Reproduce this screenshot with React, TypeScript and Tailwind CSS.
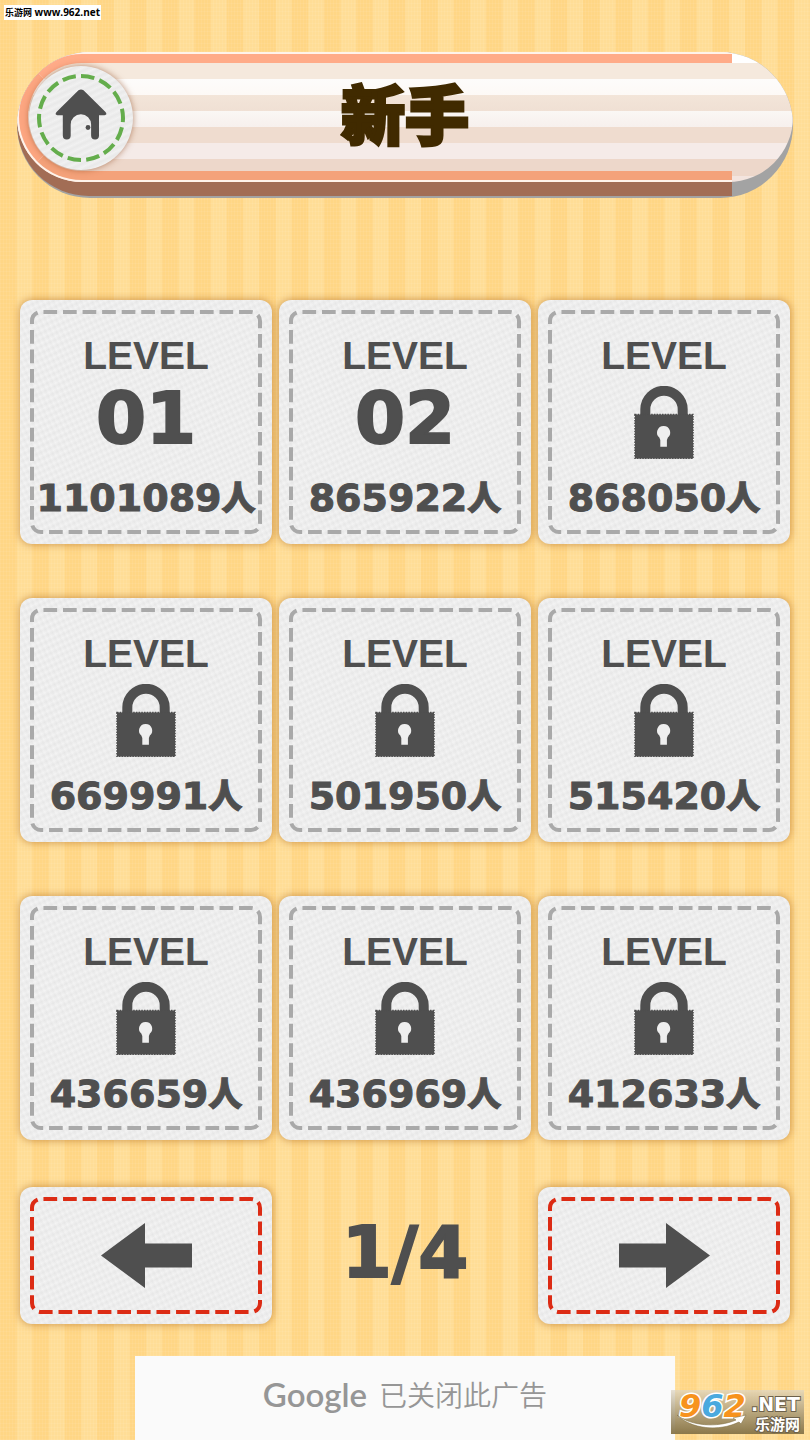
import { clsx } from "clsx";

const levels = [
  { no: "01", players: 1101089, locked: false },
  { no: "02", players: 865922, locked: false },
  { no: "03", players: 868050, locked: true },
  { no: "04", players: 669991, locked: true },
  { no: "05", players: 501950, locked: true },
  { no: "06", players: 515420, locked: true },
  { no: "07", players: 436659, locked: true },
  { no: "08", players: 436969, locked: true },
  { no: "09", players: 412633, locked: true },
];

// Embossed paper shared by the level cards and pager buttons
const paper =
  "relative rounded-xl bg-[#ededed] bg-[repeating-linear-gradient(155deg,rgba(255,255,255,0.25)_0px,rgba(214,214,214,0.15)_3px,rgba(255,255,255,0.2)_6px),repeating-linear-gradient(65deg,rgba(255,255,255,0.2)_0px,rgba(210,210,210,0.15)_3px,rgba(255,255,255,0.2)_5px)] shadow-[0_0_8px_rgba(165,95,20,0.6)]";

const stackCell = "col-start-1 row-start-1";

function Stitching({ className, dashes }: { className: string; dashes: number }) {
  return (
    <svg className="absolute inset-0 h-full w-full" aria-hidden="true">
      <rect
        x="12"
        y="12"
        rx="9"
        pathLength={dashes * 4}
        strokeDasharray="2.8 1.2"
        strokeDashoffset="-0.5"
        strokeWidth="4"
        fill="none"
        className={clsx("h-[calc(100%-24px)] w-[calc(100%-24px)]", className)}
      />
    </svg>
  );
}

function LockIcon() {
  return (
    <svg width="60" height="73" viewBox="0 0 60 73" role="img" aria-label="LOCK">
      <path d="M11.3 30V23.5a18.7 18.7 0 0 1 37.4 0V30" fill="none" stroke="#4f4f4f" strokeWidth="10" />
      <rect x="1" y="28.5" width="58" height="44" fill="#4f4f4f" />
      <rect x="1" y="28.5" width="58" height="44" fill="none" stroke="#4f4f4f" strokeWidth="1.6" strokeDasharray="1.5 1.2" />
      <path d="M29.7 40a6.6 6.6 0 0 1 4.2 11.6l-1 2.4v6.800h-6.600V54l-1-2.400A6.600 6.600 0 0 1 29.700 40Z" fill="#efefef" />
    </svg>
  );
}

function ArrowIcon({ flip = false }: { flip?: boolean }) {
  return (
    <svg width="91" height="65" viewBox="0 0 91 65" aria-hidden="true">
      <path
        d={flip ? "M91 32.5 47 0v20.5H0v24h47V65Z" : "M0 32.5 44 0v20.5h47v24H44V65Z"}
        fill="#4f4f4f"
      />
    </svg>
  );
}

function HomeButton() {
  return (
    <button
      type="button"
      aria-label="Home"
      className="h-26 w-26 rounded-full bg-[#ececec] bg-[repeating-linear-gradient(155deg,rgba(255,255,255,0.3)_0px,rgba(214,214,214,0.15)_3px,rgba(255,255,255,0.2)_6px)] shadow-[0_0_6px_rgba(140,70,30,0.6)]"
    >
      <svg width="104" height="104" viewBox="0 0 104 104" aria-hidden="true">
        <circle
          cx="52"
          cy="52"
          r="42"
          fill="none"
          stroke="#64ad4c"
          strokeWidth="4"
          pathLength="140"
          strokeDasharray="7.2 2.8"
          transform="rotate(-90 52 52)"
        />
        <path
          d="M49.5 24.3q2.500-1.800 5 0L76.500 46q2.200 2.800-1 3.200H70V69.500a3.900 3.900 0 0 1-7.900 0V58.500a10.200 10.200 0 0 0-20.400 0V69.500a3.900 3.900 0 0 1-7.900 0V49.200H28.500q-3.200-.4-1-3.200Z"
          fill="#4f4f4f"
        />
        <circle cx="59" cy="61.500" r="2.400" fill="#4f4f4f" />
      </svg>
    </button>
  );
}

function TitleBar() {
  return (
    <header className="mx-[17px] grid overflow-hidden rounded-[73px] bg-[#a3a3a3]">
      {/* Base edge of the plank */}
      <div className={clsx(stackCell, "mr-[61px] mb-[2px] rounded-l-[72px] bg-[#a26d55]")} />
      {/* Striped face */}
      <div
        className={clsx(
          stackCell,
          "mb-4 h-[130px] rounded-full bg-[linear-gradient(#ffffff_0px_11px,#f5e9dd_11px_27px,#fdfcfb_27px,#fdf9f6_43px,#f3e5d9_43px,#f0e0d4_59px,#faf7f4_59px,#f7f0ed_75px,#efdccf_75px_91px,#f5ebe8_91px_107px,#edd7ca_107px_124px,#f3e4de_124px)]",
        )}
      />
      <div
        className={clsx(
          stackCell,
          "mr-[61px] mb-4 rounded-l-[65px] border-y-2 border-l-2 border-[#fff3ea]",
        )}
      >
        <div className="h-full rounded-l-[63px] border-y-9 border-l-9 border-t-[#ffab88] border-b-[#f4a27a] border-l-[#fca681]" />
      </div>
      <div className={clsx(stackCell, "mb-4 ml-3 flex items-center pt-[2px]")}>
        <HomeButton />
      </div>
      <h1
        className={clsx(
          stackCell,
          "mb-4 self-center justify-self-center pb-3 font-['Noto_Sans_CJK_SC',sans-serif] text-[64px] leading-[64px] font-black text-[#402a00] [-webkit-text-stroke:3px_#402a00]",
        )}
      >
        新手
      </h1>
    </header>
  );
}

function LevelCard({ no, players, locked }: (typeof levels)[number]) {
  return (
    <button
      type="button"
      disabled={locked}
      className={clsx(paper, "flex flex-col items-center pt-9 pb-[26px] text-[#4f4f4f]")}
    >
      <Stitching className="stroke-[#a9a9a9]" dashes={45} />
      <span className="font-['Liberation_Sans',sans-serif] text-[39px] leading-10 font-bold">LEVEL</span>
      <span
        className={clsx(
          "flex h-[88px] items-center font-['DejaVu_Sans',sans-serif] text-[72px] leading-[72px] font-bold [-webkit-text-stroke:2px_#4f4f4f]",
          locked ? "pt-1" : "pb-1",
        )}
      >
        {locked ? <LockIcon /> : no}
      </span>
      <span className="mt-[14px] flex items-center font-['DejaVu_Sans',sans-serif] text-[38px] leading-10 font-bold whitespace-nowrap [-webkit-text-stroke:1px_#4f4f4f]">
        {players}
        <span className="-mt-1 font-['Noto_Sans_CJK_JP',sans-serif] text-[34px] font-black">人</span>
      </span>
    </button>
  );
}

function Pager() {
  return (
    <nav className="mt-[47px] grid grid-cols-3 items-center gap-x-[7px] px-5">
      <button type="button" aria-label="Previous" className={clsx(paper, "flex justify-center py-9")}>
        <Stitching className="stroke-[#dc2b14]" dashes={34} />
        <ArrowIcon />
      </button>
      <span className="pb-2 text-center font-['DejaVu_Sans',sans-serif] text-[72px] leading-[72px] font-bold text-[#4f4f4f] [-webkit-text-stroke:2px_#4f4f4f]">
        1/4
      </span>
      <button type="button" aria-label="Next" className={clsx(paper, "flex justify-center py-9")}>
        <Stitching className="stroke-[#dc2b14]" dashes={34} />
        <ArrowIcon flip />
      </button>
    </nav>
  );
}

function SiteLogo() {
  return (
    <div className="absolute right-[6px] bottom-[6px] flex h-11 w-[133px] justify-between bg-linear-to-b from-[#ded6c4]/70 to-[#857347]/95 pr-1 pl-2">
      <div className="font-['DejaVu_Sans',sans-serif] text-[32px] leading-8 font-bold text-[#f7931e] italic [-webkit-text-stroke:3px_#fff] [paint-order:stroke_fill]">
        9<span className="text-[#4aa9de]">6</span>2
      </div>
      <svg className="absolute bottom-1 left-1 h-4 w-[72px]" viewBox="0 0 72 16" aria-hidden="true">
        <path
          d="M2 1C16 12 42 14 61 6l-3-2 13-3-5 9-2-2C44 18 16 15 2 1Z"
          fill="#fff"
          stroke="#857347"
          strokeWidth=".6"
        />
      </svg>
      <div className="flex flex-col items-end text-white [-webkit-text-stroke:2px_#6d614b] [paint-order:stroke_fill]">
        <span className="pt-1 font-['DejaVu_Sans',sans-serif] text-[19px] leading-5 font-bold">.NET</span>
        <span className="font-['Noto_Sans_CJK_SC',sans-serif] text-[15px] leading-5 font-bold">乐游网</span>
      </div>
    </div>
  );
}

export default function App() {
  return (
    <div className="relative flex min-h-screen flex-col bg-[#ffda88] bg-[repeating-linear-gradient(0deg,rgba(255,255,255,0.06)_0px_1px,transparent_1px_4px),repeating-linear-gradient(90deg,rgba(255,255,255,0.06)_0px_1px,transparent_1px_3px),linear-gradient(90deg,#ffd685_50%,#ffdd96_50%)] bg-[length:auto,auto,4%_100%] pt-13">
      <div className="absolute top-[5px] left-1 bg-white px-px font-['Open_Sans','Noto_Sans_CJK_SC',sans-serif] text-[10px] leading-[14px] font-bold whitespace-nowrap text-black">
        <span className="text-[9px]">乐游网</span> www.962.net
      </div>

      <TitleBar />

      <main className="mt-[102px] grid grid-cols-3 gap-x-[7px] gap-y-[54px] px-5">
        {levels.map((level) => (
          <LevelCard key={level.no} {...level} />
        ))}
      </main>

      <Pager />

      <footer className="mt-8 flex w-2/3 grow items-center justify-center gap-3 self-center bg-[#fafafa] pt-4 pb-6 leading-10 text-[#969696]">
        <span className="font-['Lato',sans-serif] text-[33px] font-semibold">Google</span>
        <span className="font-['Noto_Sans_CJK_SC',sans-serif] text-[28px] font-[350]">已关闭此广告</span>
      </footer>

      <SiteLogo />
    </div>
  );
}
